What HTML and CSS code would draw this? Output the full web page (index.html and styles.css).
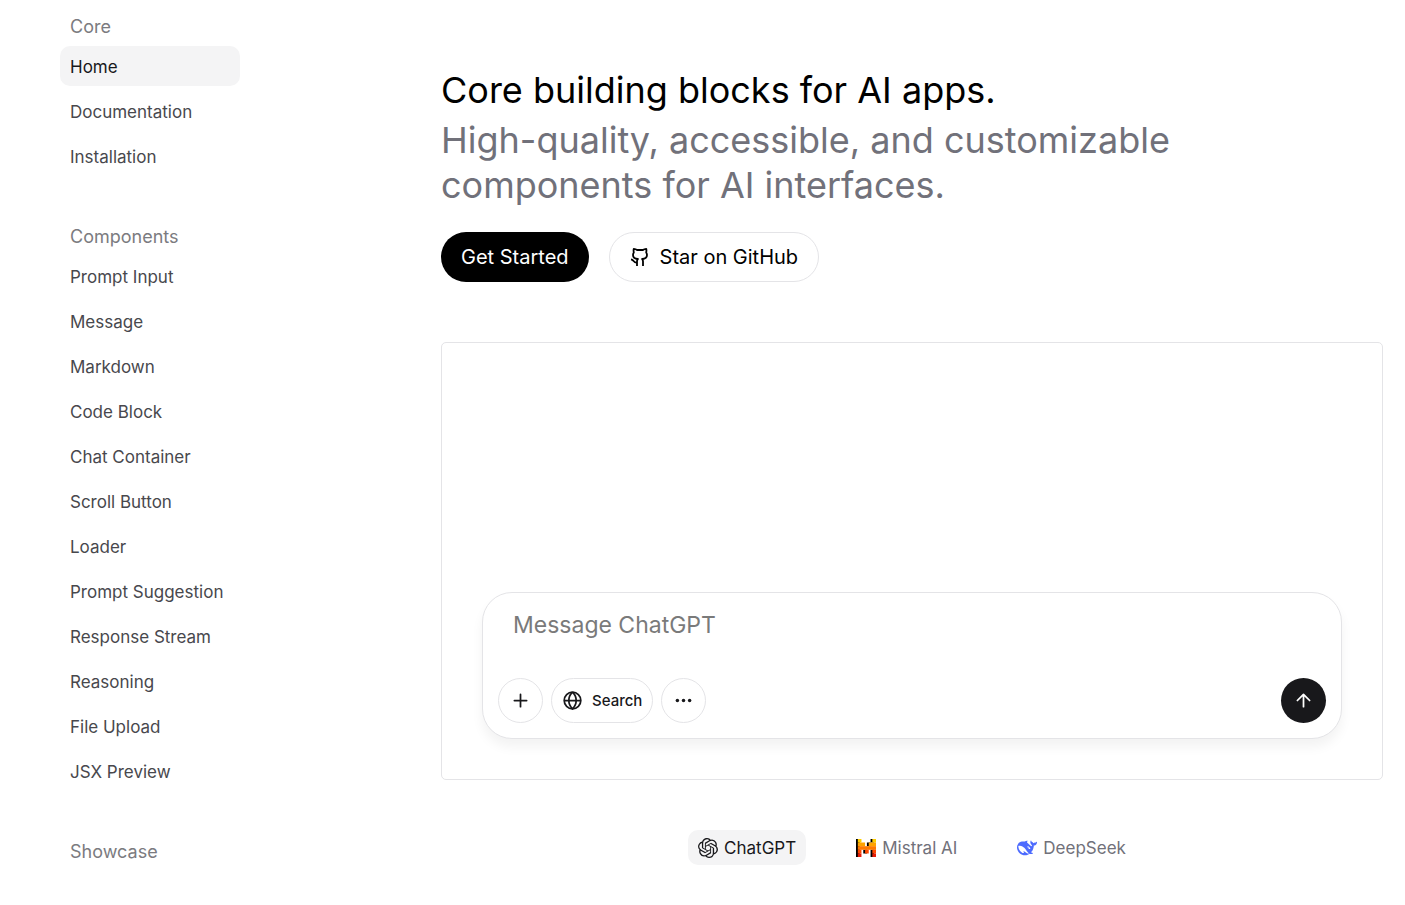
FILE: index.html
```html
<!DOCTYPE html>
<html lang="en">
<head>
  <meta charset="UTF-8">
  <meta name="viewport" content="width=device-width, initial-scale=1">
  <title>Core building blocks for AI apps</title>
  <link rel="stylesheet" href="styles.css">
</head>
<body>
  <div class="layout">
    <nav class="sidebar">
      <section class="nav-group">
        <h2 class="nav-title">Core</h2>
        <ul class="nav-list">
          <li><a class="active" href="#">Home</a></li>
          <li><a href="#">Documentation</a></li>
          <li><a href="#">Installation</a></li>
        </ul>
      </section>
      <section class="nav-group">
        <h2 class="nav-title">Components</h2>
        <ul class="nav-list">
          <li><a href="#">Prompt Input</a></li>
          <li><a href="#">Message</a></li>
          <li><a href="#">Markdown</a></li>
          <li><a href="#">Code Block</a></li>
          <li><a href="#">Chat Container</a></li>
          <li><a href="#">Scroll Button</a></li>
          <li><a href="#">Loader</a></li>
          <li><a href="#">Prompt Suggestion</a></li>
          <li><a href="#">Response Stream</a></li>
          <li><a href="#">Reasoning</a></li>
          <li><a href="#">File Upload</a></li>
          <li><a href="#">JSX Preview</a></li>
        </ul>
      </section>
      <section class="nav-group">
        <h2 class="nav-title">Showcase</h2>
      </section>
    </nav>

    <main class="content">
      <h1 class="title">Core building blocks for AI apps.</h1>
      <p class="subtitle">High-quality, accessible, and customizable components for AI interfaces.</p>

      <div class="actions">
        <a class="btn btn-dark" href="#">Get Started</a>
        <a class="btn btn-light" href="#">
          <svg width="20" height="20" viewBox="0 0 20 20" fill="none" stroke="currentColor" stroke-width="1.8" stroke-linejoin="round" aria-hidden="true">
            <path d="M7 19v-4.500c0-1.100.3-1.900.9-2.500C5 11.900 3 10.800 3 8c0-1 .3-1.900.8-2.600-.3-1.200-.3-2.400 0-3.600 1.300.1 2.400.5 3.300 1.200h5.800c.9-.7 2-1.100 3.300-1.200.3 1.200.3 2.400 0 3.600.5.7.8 1.600.8 2.600 0 2.800-2 3.900-4.900 4 .6.600.9 1.400.9 2.500V19"/>
            <path d="M7 15.500c-3.600.5-3-2.800-6-3.200"/>
          </svg>
          Star on GitHub
        </a>
      </div>

      <div class="demo">
        <form class="prompt">
          <textarea class="prompt-text" rows="1" aria-label="Message" placeholder="Message ChatGPT"></textarea>
          <div class="prompt-bar">
            <button class="tool round" type="button" aria-label="Add">
              <svg width="21" height="21" viewBox="0 0 24 24" fill="none" stroke="currentColor" stroke-width="2" stroke-linecap="round" aria-hidden="true"><path d="M5 12h14M12 5v14"/></svg>
            </button>
            <button class="tool" type="button">
              <svg width="21" height="21" viewBox="0 0 24 24" fill="none" stroke="currentColor" stroke-width="2" aria-hidden="true"><circle cx="12" cy="12" r="9.500"/><path d="M2.500 12h19M12 2.500c-5.600 5.500-5.600 13.500 0 19 5.600-5.500 5.600-13.500 0-19"/></svg>
              Search
            </button>
            <button class="tool round" type="button" aria-label="More">
              <svg width="21" height="21" viewBox="0 0 24 24" fill="currentColor" aria-hidden="true"><circle cx="5" cy="12" r="2"/><circle cx="12" cy="12" r="2"/><circle cx="19" cy="12" r="2"/></svg>
            </button>
            <button class="tool round send" type="button" aria-label="Send">
              <svg width="21" height="21" viewBox="0 0 24 24" fill="none" stroke="currentColor" stroke-width="2" stroke-linecap="round" stroke-linejoin="round" aria-hidden="true"><path d="M5 12l7-7 7 7M12 19V5"/></svg>
            </button>
          </div>
        </form>
      </div>

      <div class="models">
        <button class="model selected" type="button">
          <svg width="20" height="20" viewBox="0 0 24 24" fill="currentColor" aria-hidden="true"><path d="M22.2819 9.8211a5.9847 5.9847 0 0 0-.5157-4.9108 6.0462 6.0462 0 0 0-6.5098-2.9A6.0651 6.0651 0 0 0 4.9807 4.1818a5.9847 5.9847 0 0 0-3.9977 2.9 6.0462 6.0462 0 0 0 .7427 7.0966 5.98 5.98 0 0 0 .511 4.9107 6.051 6.051 0 0 0 6.5146 2.9001A5.9847 5.9847 0 0 0 13.2599 24a6.0557 6.0557 0 0 0 5.7718-4.2058 5.9894 5.9894 0 0 0 3.9977-2.9001 6.0557 6.0557 0 0 0-.7475-7.0729zm-9.022 12.6081a4.4755 4.4755 0 0 1-2.8764-1.0408l.1419-.0804 4.7783-2.7582a.7948.7948 0 0 0 .3927-.6813v-6.7369l2.02 1.1686a.071.071 0 0 1 .038.052v5.5826a4.504 4.504 0 0 1-4.4945 4.4944zm-9.6607-4.1254a4.4708 4.4708 0 0 1-.5346-3.0137l.142.0852 4.783 2.7582a.7712.7712 0 0 0 .7806 0l5.8428-3.3685v2.3324a.0804.0804 0 0 1-.0332.0615L9.74 19.9502a4.4992 4.4992 0 0 1-6.1408-1.6464zM2.3408 7.8956a4.485 4.485 0 0 1 2.3655-1.9728V11.6a.7664.7664 0 0 0 .3879.6765l5.8144 3.3543-2.0201 1.1685a.0757.0757 0 0 1-.071 0l-4.8303-2.7865A4.504 4.504 0 0 1 2.3408 7.872zm16.5963 3.8558L13.1038 8.364 15.1192 7.2a.0757.0757 0 0 1 .071 0l4.8303 2.7913a4.4944 4.4944 0 0 1-.6765 8.1042v-5.6772a.79.79 0 0 0-.407-.667zm2.0107-3.0231l-.142-.0852-4.7735-2.7818a.7759.7759 0 0 0-.7854 0L9.409 9.2297V6.8974a.0662.0662 0 0 1 .0284-.0615l4.8303-2.7866a4.4992 4.4992 0 0 1 6.6802 4.66zM8.3065 12.863l-2.02-1.1638a.0804.0804 0 0 1-.038-.0567V6.0742a4.4992 4.4992 0 0 1 7.3757-3.4537l-.142.0805L8.704 5.459a.7948.7948 0 0 0-.3927.6813zm1.0976-2.3654l2.602-1.4998 2.6069 1.4998v2.9994l-2.5974 1.4997-2.6067-1.4997Z"/></svg>
          ChatGPT
        </button>
        <button class="model" type="button">
          <svg width="20" height="20" viewBox="0 0 22 20" aria-hidden="true">
            <path fill="#000" d="M0 0h4v20H0zM16 0h4v4h-4zM12 4h4v4h-4zM8 12h4v4H8zM16 12h4v8h-4z"/>
            <path fill="#ffcd00" d="M2 0h4v4H2zM18 0h4v4h-4z"/>
            <path fill="#ffa300" d="M2 4h8v4H2zM14 4h8v4h-8z"/>
            <path fill="#ff7a00" d="M2 8h20v4H2z"/>
            <path fill="#ff4900" d="M2 12h4v4H2zM10 12h4v4h-4zM18 12h4v4h-4z"/>
            <path fill="#e51a05" d="M2 16h4v4H2zM18 16h4v4h-4z"/>
          </svg>
          Mistral AI
        </button>
        <button class="model" type="button">
          <svg width="20" height="20" viewBox="0 0 24 24" fill="#4d6bfe" aria-hidden="true"><path d="M23.748 4.482c-.254-.124-.364.113-.512.234-.051.039-.094.09-.137.136-.372.397-.806.657-1.373.626-.829-.046-1.537.214-2.163.848-.133-.782-.575-1.248-1.247-1.548-.352-.156-.708-.311-.955-.65-.172-.241-.219-.51-.305-.774-.055-.16-.11-.323-.293-.35-.2-.031-.278.136-.356.276-.313.572-.434 1.202-.422 1.84.027 1.436.633 2.58 1.838 3.393.137.093.172.187.129.323-.082.28-.18.552-.266.833-.055.179-.137.217-.329.14a5.526 5.526 0 01-1.736-1.18c-.857-.828-1.631-1.742-2.597-2.458a11.365 11.365 0 00-.689-.471c-.985-.957.13-1.743.388-1.836.27-.098.093-.432-.779-.428-.872.004-1.67.295-2.687.684a3.055 3.055 0 01-.465.137 9.597 9.597 0 00-2.883-.102c-1.885.21-3.39 1.102-4.497 2.623C.082 8.606-.231 10.684.152 12.85c.403 2.284 1.569 4.175 3.36 5.653 1.858 1.533 3.997 2.284 6.438 2.14 1.482-.085 3.133-.284 4.994-1.86.47.234.962.327 1.78.397.63.059 1.236-.03 1.705-.128.735-.156.684-.837.419-.961-2.155-1.004-1.682-.595-2.113-.926 1.096-1.296 2.746-2.642 3.392-7.003.05-.347.007-.565 0-.845-.004-.17.035-.237.23-.256a4.173 4.173 0 001.545-.475c1.396-.763 1.96-2.015 2.093-3.517.02-.23-.004-.467-.247-.588zM11.581 18c-2.089-1.642-3.102-2.183-3.52-2.16-.392.024-.321.471-.235.763.09.288.207.486.371.739.114.167.192.416-.113.603-.673.416-1.842-.14-1.897-.167-1.361-.802-2.5-1.86-3.301-3.307-.774-1.393-1.224-2.887-1.298-4.482-.02-.386.093-.522.477-.592a4.696 4.696 0 011.529-.039c2.132.312 3.946 1.265 5.468 2.774.868.86 1.525 1.887 2.202 2.891.72 1.066 1.494 2.082 2.48 2.914.348.292.625.514.891.677-.802.09-2.14.11-3.054-.614zm1-6.44a.306.306 0 01.415-.287.302.302 0 01.2.288.306.306 0 01-.31.307.303.303 0 01-.304-.308zm3.11 1.596c-.2.081-.399.151-.59.16a1.245 1.245 0 01-.798-.254c-.274-.23-.47-.358-.552-.758a1.73 1.73 0 01.016-.588c.07-.327-.008-.537-.239-.727-.187-.156-.426-.199-.688-.199a.559.559 0 01-.254-.078c-.11-.054-.2-.19-.114-.358.028-.054.16-.186.192-.21.356-.202.767-.136 1.146.016.352.144.618.408 1.001.782.391.451.462.576.685.914.176.265.336.537.445.848.067.195-.019.354-.25.452z"/></svg>
          DeepSeek
        </button>
      </div>
    </main>
  </div>
</body>
</html>
```

FILE: styles.css
```css
* {
  box-sizing: border-box;
}

body {
  margin: 0;
  background: #fff;
  color: #000;
  font-family: Inter, "Liberation Sans", sans-serif;
}

button,
textarea {
  font-family: inherit;
}

.layout {
  display: flex;
  align-items: flex-start;
}

/* Sidebar */
.sidebar {
  display: flex;
  flex-direction: column;
  gap: 40px;
  flex: 0 0 240px;
  padding: 6px 0 0 60px;
}

.nav-title {
  margin: 0;
  padding: 2px 10px 0;
  font-size: 18px;
  font-weight: 400;
  line-height: 38px;
  color: #7b7b80;
}

.nav-list {
  display: flex;
  flex-direction: column;
  gap: 5px;
  margin: 0;
  padding: 0;
  list-style: none;
}

.nav-list a {
  display: block;
  padding: 2px 10px 0;
  border-radius: 10px;
  font-size: 17px;
  line-height: 38px;
  color: #48484d;
  text-decoration: none;
}

.nav-list .active {
  background: #f4f4f5;
  color: #18181b;
}

/* Main column */
.content {
  flex: 1;
  min-width: 0;
  margin-left: 201px;
  padding: 68px 22px 40px 0;
}

.title,
.subtitle {
  margin: 0;
  font-size: 36px;
  font-weight: 400;
  line-height: 45px;
}

.subtitle {
  max-width: 800px;
  margin-top: 5px;
  color: #71717a;
}

.actions {
  display: flex;
  gap: 20px;
  margin-top: 24px;
}

.btn {
  display: flex;
  align-items: center;
  gap: 10px;
  height: 50px;
  padding: 0 20px;
  border-radius: 25px;
  font-size: 20px;
  text-decoration: none;
}

.btn-dark {
  background: #000;
  color: #fff;
}

.btn-light {
  border: 1px solid #e4e4e7;
  color: #000;
}

.demo {
  display: flex;
  align-items: flex-end;
  min-height: 438px;
  margin-top: 60px;
  padding: 40px;
  border: 1px solid #e4e4e7;
  border-radius: 5px;
}

.prompt {
  flex: 1;
  padding: 15px;
  border: 1px solid #e4e4e7;
  border-radius: 30px;
  background: #fff;
  box-shadow: 0 8px 12px rgba(0, 0, 0, 0.05);
}

.prompt-text {
  display: block;
  width: 100%;
  height: 35px;
  margin-bottom: 35px;
  padding: 0 15px;
  border: none;
  outline: none;
  resize: none;
  overflow: hidden;
  background: transparent;
  font-size: 23px;
  line-height: 35px;
}

.prompt-text::placeholder {
  color: #7a7a7a;
}

.prompt-bar {
  display: flex;
  gap: 8px;
}

.tool {
  display: flex;
  align-items: center;
  justify-content: center;
  gap: 9px;
  height: 45px;
  padding: 0 10px;
  border: 1px solid #e4e4e7;
  border-radius: 23px;
  background: #fff;
  color: #18181b;
  font-size: 15px;
  font-weight: 500;
}

.round {
  width: 45px;
  padding: 0;
}

.send {
  margin-left: auto;
  border: none;
  background: #18181b;
  color: #fff;
}

/* Model switcher */
.models {
  display: flex;
  justify-content: center;
  gap: 40px;
  margin-top: 50px;
}

.model {
  display: flex;
  align-items: center;
  gap: 6px;
  height: 35px;
  padding: 0 10px;
  border: none;
  border-radius: 10px;
  background: transparent;
  color: #71717a;
  font-size: 17px;
}

.selected {
  background: #f4f4f5;
  color: #18181b;
}
```
